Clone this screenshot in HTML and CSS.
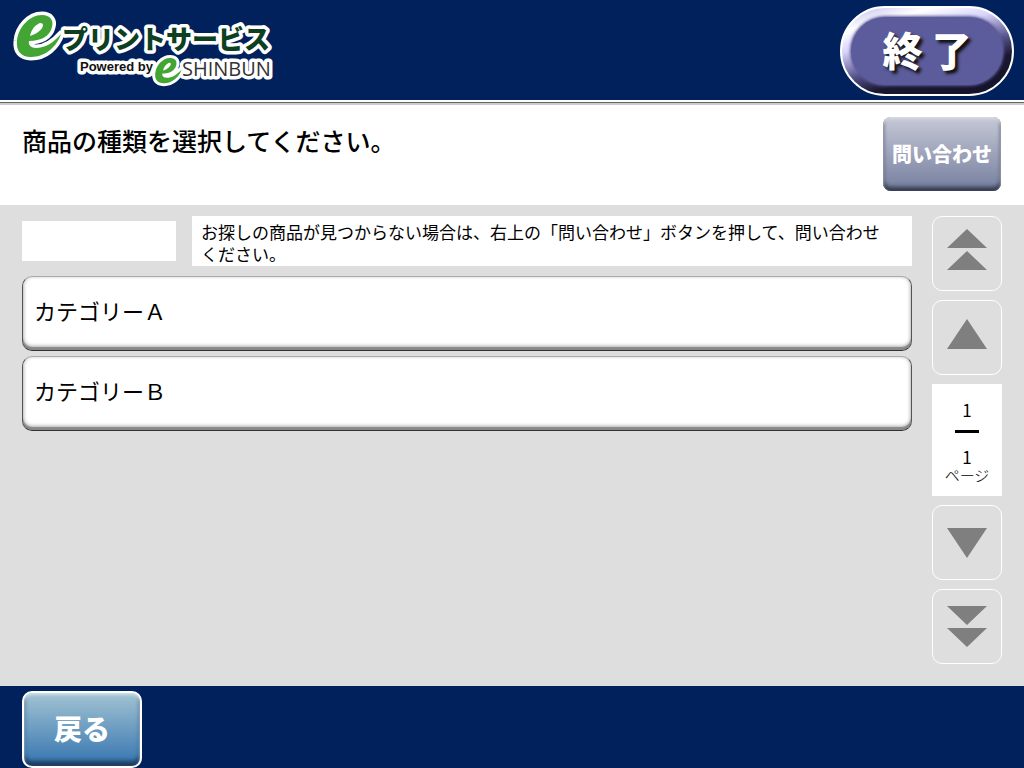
FILE: index.html
```html
<!DOCTYPE html>
<html lang="ja">
<head>
  <meta charset="UTF-8" />
  <meta name="viewport" content="width=device-width, initial-scale=1.0" />
  <title>eプリントサービス</title>
  <link rel="stylesheet" href="styles.css">
</head>
<body>
  <header class="header">
    <svg class="logo" width="270" height="84" viewBox="8 6 270 84" role="img" aria-label="eプリントサービス Powered by eSHINBUN">
      <defs>
        <path id="e-mark" fill-rule="evenodd" d="M61 34C57 46 46 57 31 57C21 57 16 51 17 41C18 28 29 15 42 15C50 15 54 20 52 27C50 36 41 41 29 41C28 45 31 48 36 48C45 48 53 43 61 34ZM30 36C37 34 43 29 43 25C43 23 40 22 38 24C34 26 31 31 30 36Z" />
      </defs>
      <text x="182" y="76" class="logo-brand">SHINBUN</text>
      <text x="80" y="71" class="logo-powered">Powered by</text>
      <use href="#e-mark" transform="translate(145 49) scale(.6)" class="logo-mark small" />
      <text x="62" y="49" class="logo-name">プリントサービス</text>
      <use href="#e-mark" class="logo-mark" />
    </svg>
    <button type="button" class="exit-button"><span>終 了</span></button>
  </header>

  <section class="guide">
    <h1>商品の種類を選択してください。</h1>
    <button type="button" class="inquiry-button">問い合わせ</button>
  </section>

  <main class="main">
    <div class="content">
      <div class="info">
        <div class="info-blank"></div>
        <p class="info-text">お探しの商品が見つからない場合は、右上の「問い合わせ」ボタンを押して、問い合わせください。</p>
      </div>
      <button type="button" class="category">カテゴリーＡ</button>
      <button type="button" class="category">カテゴリーＢ</button>
    </div>

    <nav class="pager">
      <button type="button" class="up" aria-label="最初のページ">
        <svg width="40" height="42" viewBox="0 0 40 42"><path d="M20 0L40 19H0ZM20 22L40 41H0Z" /></svg>
      </button>
      <button type="button" class="up" aria-label="前のページ">
        <svg width="40" height="30" viewBox="0 0 40 30"><path d="M20 0L40 30H0Z" /></svg>
      </button>
      <div class="page-count">
        <span>1</span>
        <hr>
        <span>1</span>
        <small>ページ</small>
      </div>
      <button type="button" aria-label="次のページ">
        <svg width="40" height="30" viewBox="0 0 40 30"><path d="M0 0H40L20 30Z" /></svg>
      </button>
      <button type="button" aria-label="最後のページ">
        <svg width="40" height="42" viewBox="0 0 40 42"><path d="M0 0H40L20 19ZM0 22H40L20 41Z" /></svg>
      </button>
    </nav>
  </main>

  <footer class="footer">
    <button type="button" class="back-button">戻る</button>
  </footer>
</body>
</html>
```
FILE: styles.css
```css
* {
  box-sizing: border-box;
}
body {
  display: flex;
  flex-direction: column;
  min-height: 100vh;
  margin: 0;
  background-color: #dedede;
  color: #000;
  font-family: "Noto Sans CJK JP", sans-serif;
}
button {
  padding: 0;
  border: none;
  color: inherit;
  font-family: inherit;
  cursor: pointer;
}

/* header */
.header {
  display: flex;
  justify-content: space-between;
  align-items: flex-start;
  height: 100px;
  padding: 6px 10px 0 8px;
  background-color: #00215c;
}
.logo text,
.logo-mark {
  stroke: #fff;
  stroke-width: 7px;
  stroke-linejoin: round;
  paint-order: stroke;
}
.logo-mark {
  fill: #43a533;
}
.logo-mark.small {
  stroke-width: 10px;
}
.logo-name {
  font-size: 26px;
  font-weight: 900;
  fill: #0c4020;
}
.logo-powered {
  font-family: "Liberation Sans", sans-serif;
  font-size: 13px;
  font-weight: bold;
  fill: #111;
}
.logo-brand {
  font-family: "Open Sans", sans-serif;
  font-size: 20px;
  fill: #333;
}
.exit-button {
  width: 174px;
  height: 90px;
  padding: 9px;
  border: 2px solid #fff;
  border-radius: 45px;
  background: linear-gradient(165deg, #b8b4e8 0%, #fff 18%, #d8d4fa 34%, #55538c 55%, #1a1730 70%, #14122a 100%);
}
.exit-button span {
  display: flex;
  justify-content: center;
  align-items: center;
  height: 100%;
  padding-bottom: 4px;
  border-radius: 36px;
  background-color: #5c5b9b;
  box-shadow: 0 0 3px 1px #5c5b9b;
  color: #fff;
  font-size: 40px;
  font-weight: 900;
  text-shadow: 3px 3px 3px #111;
}

/* guide message */
.guide {
  display: flex;
  justify-content: space-between;
  align-items: flex-start;
  height: 105px;
  padding: 12px 23px 0 22px;
  border-top: 2px solid #fff;
  background-color: #fff;
  box-shadow: inset 0 1px #666, inset 0 3px #ccc;
}
h1 {
  margin: 8px 0 0;
  font-size: 25px;
  font-weight: 500;
  line-height: 36px;
}
.inquiry-button {
  width: 118px;
  height: 74px;
  margin-top: 3px;
  padding-bottom: 2px;
  border-radius: 8px;
  background: linear-gradient(#c6c8d6, #747e9e);
  box-shadow: inset 0 2px 3px #e0e0e8, inset 0 -4px 4px #333a4c, inset 0 0 3px #667;
  color: #fff;
  font-size: 20px;
  font-weight: 900;
}

/* category list */
.main {
  display: flex;
  flex: 1;
  gap: 20px;
  padding: 11px 22px;
}
.content {
  display: flex;
  flex: 1;
  flex-direction: column;
  gap: 5px;
}
.info {
  display: flex;
  align-items: center;
  gap: 16px;
  margin-bottom: 5px;
}
.info-blank {
  width: 154px;
  height: 40px;
  background-color: #fff;
}
.info-text {
  flex: 1;
  min-height: 50px;
  margin: 0;
  padding: 5px 20px 1px 9px;
  background-color: #fff;
  font-size: 17px;
  line-height: 22px;
}
.category {
  height: 75px;
  padding: 0 11px 8px;
  border: 1px solid #555;
  border-top-color: #aaa;
  border-bottom: 1px solid #333;
  border-radius: 10px;
  background-color: #fff;
  box-shadow: inset 0 -3px 1px #888, inset 0 -5px 3px #ccc, inset 2px 0 3px #ddd, inset -2px 0 3px #ddd;
  font-size: 22px;
  text-align: left;
}

/* pager */
.pager {
  display: flex;
  flex-direction: column;
  gap: 9px;
  width: 70px;
}
.pager button {
  display: flex;
  justify-content: center;
  align-items: center;
  height: 75px;
  border: 1px solid #fff;
  border-radius: 10px;
  background-color: transparent;
}
.pager .up {
  padding-bottom: 8px;
}
.pager path {
  fill: #7f7f7f;
}
.page-count {
  display: flex;
  flex-direction: column;
  align-items: center;
  height: 112px;
  padding-top: 15px;
  background-color: #fff;
  font-size: 17px;
  line-height: 22px;
}
.page-count hr {
  width: 24px;
  height: 3px;
  margin: 9px 0 13px;
  border: none;
  background-color: #000;
}
.page-count small {
  font-size: 15px;
  font-weight: 300;
  line-height: 14px;
}

/* footer */
.footer {
  height: 82px;
  padding: 5px 22px 0;
  background-color: #00215c;
}
.back-button {
  width: 120px;
  height: 77px;
  padding-bottom: 3px;
  border: 2px solid #fff;
  border-radius: 10px;
  background: linear-gradient(#a2c3d2, #3474b0);
  box-shadow: inset 0 2px 3px #cde0e8, inset 0 -5px 4px #1c3c5c;
  color: #fff;
  font-size: 28px;
  font-weight: 900;
}
```
